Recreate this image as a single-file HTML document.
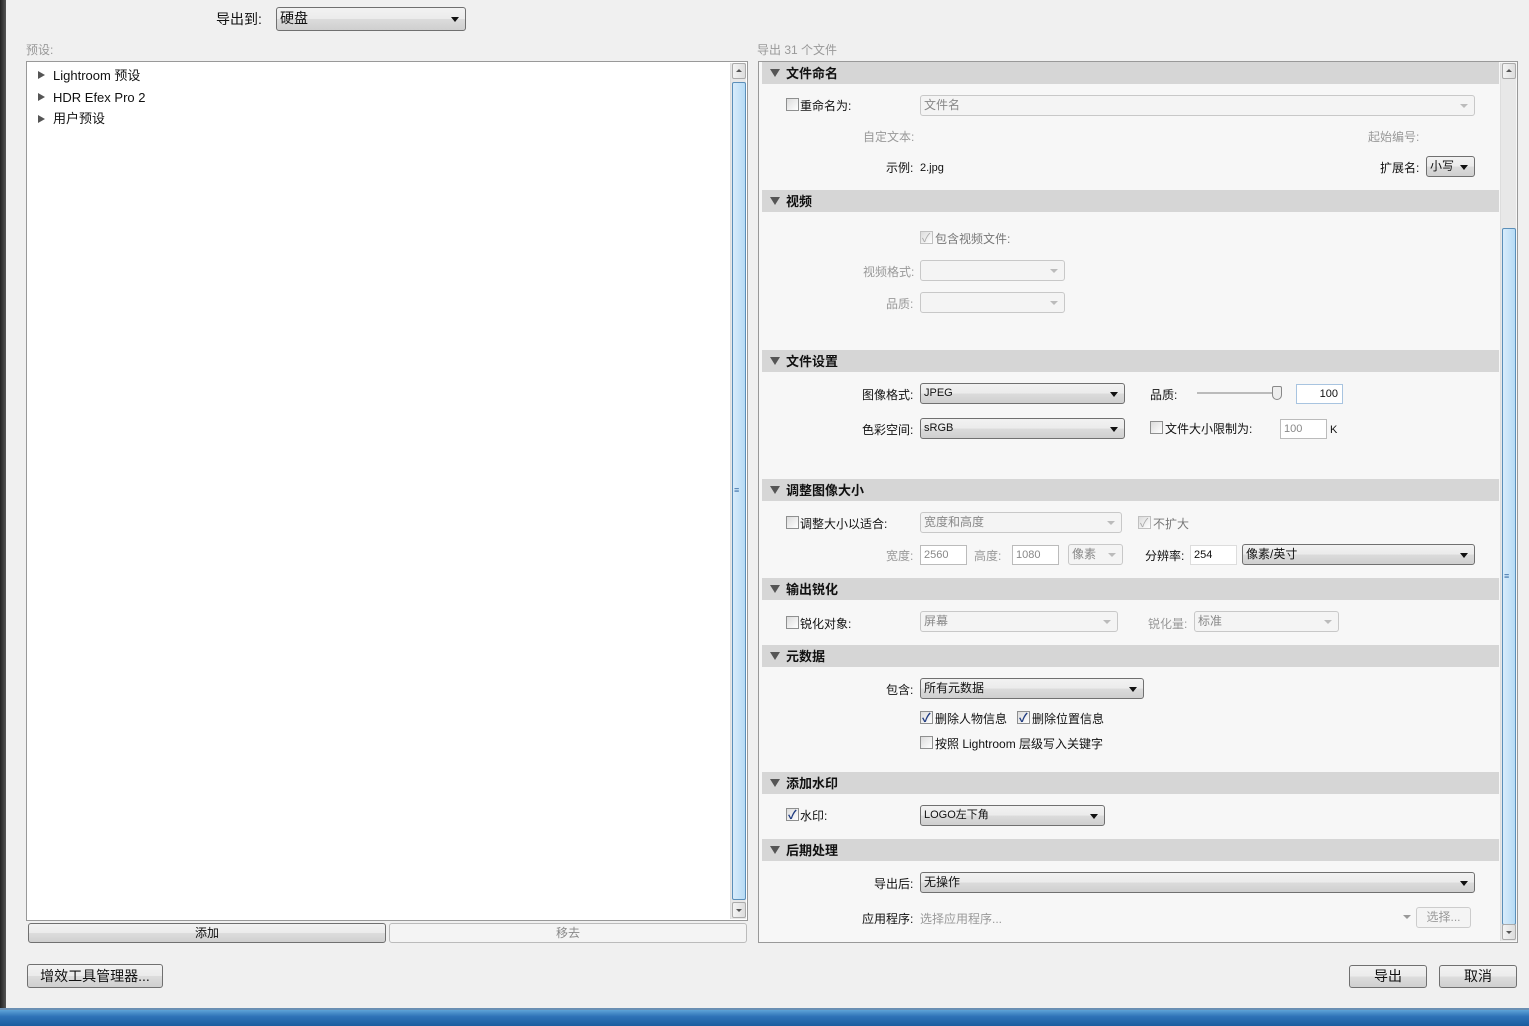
<!DOCTYPE html>
<html><head><meta charset="utf-8"><style>
*{box-sizing:border-box;margin:0;padding:0}
body{width:1529px;height:1026px;background:#f0f0f0;position:relative;overflow:hidden;font-family:"Liberation Sans","Noto Sans CJK SC",sans-serif;font-size:12px;color:#111}
.a{position:absolute}
.t{position:absolute;white-space:nowrap;line-height:16px;margin-top:1px}
.g{color:#999}
.sel{position:absolute;border:1px solid #707070;border-radius:3px;background:linear-gradient(#f2f2f2,#ebebeb 50%,#dcdcdc 50%,#cfcfcf);padding-left:3px;line-height:19px;font-size:12px}
.sel::after{content:"";position:absolute;right:6px;top:50%;margin-top:-2px;border:4px solid transparent;border-top:5px solid #111;border-bottom:0}
.dsel{position:absolute;border:1px solid #c8c8c8;border-radius:3px;background:#f4f4f4;padding-left:3px;line-height:19px;color:#888}
.dsel::after{content:"";position:absolute;right:6px;top:50%;margin-top:-2px;border:4px solid transparent;border-top:4px solid #bbb;border-bottom:0}
.cb{position:absolute;width:13px;height:13px;border:1px solid #8e8f8f;background:linear-gradient(135deg,#dcdcdc,#fff)}
.cb.k::after{content:"✓";position:absolute;left:1px;top:-3px;font-size:12px;color:#1f3b80;font-weight:bold}
.cb.d{border-color:#c0c0c0}
.cb.d::after{content:"✓";position:absolute;left:1px;top:-3px;font-size:12px;color:#aaa}
.in{position:absolute;border:1px solid #bbb;background:#fff;line-height:18px;padding-left:3px;font-size:11px}
.hd{position:absolute;left:762px;width:737px;height:22px;background:#d6d6d6;font-weight:bold;font-size:13px;line-height:23px;padding-left:24px}
.hd::before{content:"";position:absolute;left:8px;top:7px;border:5px solid transparent;border-top:8px solid #555;border-bottom:0}
.btn{position:absolute;border:1px solid #707070;border-radius:3px;background:linear-gradient(#f2f2f2,#ebebeb 50%,#dddddd 50%,#cfcfcf);text-align:center;font-size:14px}
.sb{position:absolute;width:16px;background:#e8e8e8;border-left:1px solid #ddd}
.arr{position:absolute;left:1px;width:14px;height:16px;border:1px solid #aaa;border-radius:2px;background:linear-gradient(90deg,#f4f4f4,#ddd)}
.arr.u::after{content:"";position:absolute;left:3px;top:5px;border:3px solid transparent;border-bottom:3px solid #555;border-top:0}
.arr.dn::after{content:"";position:absolute;left:3px;top:6px;border:3px solid transparent;border-top:3px solid #555;border-bottom:0}
.th{position:absolute;left:1px;width:14px;border:1px solid #5b8fb9;border-radius:2px;background:linear-gradient(90deg,#d8ecfb,#b7dbf5)}
.tri{position:absolute;border:4px solid transparent;border-left:7px solid #555;border-right:0}
</style></head><body>
<div class="a" style="left:0;top:0;width:6px;height:1010px;background:linear-gradient(90deg,#222,#555)"></div>
<div class="a" style="left:0;top:1008px;width:1529px;height:2px;background:#6a8fb3"></div>
<div class="a" style="left:0;top:1010px;width:1529px;height:16px;background:linear-gradient(#5ea3d8,#2f73b8 40%,#1a5c9e)"></div>

<div class="t" style="left:216px;top:10px;font-size:14px">导出到:</div>
<div class="sel" style="left:276px;top:7px;width:190px;height:24px;line-height:21px;font-size:14px">硬盘</div>
<div class="t g" style="left:26px;top:41px">预设:</div>

<div class="a" style="left:26px;top:61px;width:722px;height:860px;background:#fff;border:1px solid #999"></div>
<div class="tri" style="left:38px;top:71px"></div><div class="t" style="left:53px;top:67px;font-size:13px">Lightroom 预设</div>
<div class="tri" style="left:38px;top:93px"></div><div class="t" style="left:53px;top:89px;font-size:13px">HDR Efex Pro 2</div>
<div class="tri" style="left:38px;top:115px"></div><div class="t" style="left:53px;top:110px;font-size:13px">用户预设</div>
<div class="sb" style="left:730px;top:63px;height:856px">
 <div class="arr u" style="top:0"></div><div class="th" style="top:19px;height:818px"></div><div class="arr dn" style="top:839px"></div>
 <div class="t" style="left:3px;top:418px;font-size:9px;color:#3a6ea5">≡</div>
</div>
<div class="btn" style="left:28px;top:923px;width:358px;height:20px;font-size:12px;line-height:19px">添加</div>
<div class="btn" style="left:389px;top:923px;width:358px;height:20px;font-size:12px;line-height:19px;background:#f4f4f4;border-color:#bbb;color:#888">移去</div>
<div class="btn" style="left:27px;top:964px;width:136px;height:24px;line-height:22px">增效工具管理器...</div>

<div class="t g" style="left:757px;top:41px">导出 31 个文件</div>
<div class="a" style="left:758px;top:61px;width:760px;height:882px;background:#f7f7f7;border:1px solid #999"></div>
<div class="sb" style="left:1500px;top:63px;height:878px">
 <div class="arr u" style="top:0"></div><div class="th" style="top:165px;height:697px"></div><div class="arr dn" style="top:861px"></div>
 <div class="t" style="left:3px;top:504px;font-size:9px;color:#3a6ea5">≡</div>
</div>

<div class="hd" style="top:62px">文件命名</div>
<div class="cb" style="left:786px;top:98px"></div><div class="t" style="left:800px;top:97px">重命名为:</div>
<div class="dsel" style="left:920px;top:95px;width:555px;height:21px">文件名</div>
<div class="t g" style="left:863px;top:128px">自定文本:</div>
<div class="t g" style="left:1368px;top:128px">起始编号:</div>
<div class="t" style="left:886px;top:159px">示例:</div><div class="t" style="left:920px;top:159px;font-size:11px">2.jpg</div>
<div class="t" style="left:1380px;top:159px">扩展名:</div>
<div class="sel" style="left:1426px;top:156px;width:49px;height:21px">小写</div>

<div class="hd" style="top:190px">视频</div>
<div class="cb d" style="left:920px;top:231px"></div><div class="t g" style="left:935px;top:230px;color:#777">包含视频文件:</div>
<div class="t g" style="left:863px;top:263px">视频格式:</div><div class="dsel" style="left:920px;top:260px;width:145px;height:21px"></div>
<div class="t g" style="left:886px;top:295px">品质:</div><div class="dsel" style="left:920px;top:292px;width:145px;height:21px"></div>

<div class="hd" style="top:350px">文件设置</div>
<div class="t" style="left:862px;top:386px">图像格式:</div><div class="sel" style="left:920px;top:383px;width:205px;height:21px;font-size:11px">JPEG</div>
<div class="t" style="left:1150px;top:386px">品质:</div>
<div class="a" style="left:1197px;top:392px;width:82px;height:2px;background:#bbb"></div>
<div class="a" style="left:1272px;top:386px;width:10px;height:14px;border:1px solid #888;border-radius:2px 2px 5px 5px;background:#eee"></div>
<div class="in" style="left:1296px;top:384px;width:47px;height:20px;text-align:right;padding-right:4px;border-color:#a8c4e0">100</div>
<div class="t" style="left:862px;top:421px">色彩空间:</div><div class="sel" style="left:920px;top:418px;width:205px;height:21px;font-size:11px">sRGB</div>
<div class="cb" style="left:1150px;top:421px"></div><div class="t" style="left:1165px;top:420px">文件大小限制为:</div>
<div class="in" style="left:1280px;top:419px;width:47px;height:20px;color:#888">100</div><div class="t" style="left:1330px;top:421px;font-size:11px">K</div>

<div class="hd" style="top:479px">调整图像大小</div>
<div class="cb" style="left:786px;top:516px"></div><div class="t" style="left:800px;top:515px">调整大小以适合:</div>
<div class="dsel" style="left:920px;top:512px;width:202px;height:21px">宽度和高度</div>
<div class="cb d" style="left:1138px;top:516px"></div><div class="t g" style="left:1153px;top:515px;color:#777">不扩大</div>
<div class="t g" style="left:886px;top:547px">宽度:</div><div class="in" style="left:920px;top:545px;width:47px;height:20px;color:#888">2560</div>
<div class="t g" style="left:974px;top:547px">高度:</div><div class="in" style="left:1012px;top:545px;width:47px;height:20px;color:#888">1080</div>
<div class="dsel" style="left:1068px;top:544px;width:55px;height:21px">像素</div>
<div class="t" style="left:1145px;top:547px">分辨率:</div><div class="in" style="left:1190px;top:545px;width:47px;height:20px;border-color:#ddd">254</div>
<div class="sel" style="left:1242px;top:544px;width:233px;height:21px">像素/英寸</div>

<div class="hd" style="top:578px">输出锐化</div>
<div class="cb" style="left:786px;top:616px"></div><div class="t" style="left:800px;top:615px">锐化对象:</div>
<div class="dsel" style="left:920px;top:611px;width:198px;height:21px">屏幕</div>
<div class="t g" style="left:1148px;top:615px">锐化量:</div>
<div class="dsel" style="left:1194px;top:611px;width:145px;height:21px">标准</div>

<div class="hd" style="top:645px">元数据</div>
<div class="t" style="left:886px;top:681px">包含:</div><div class="sel" style="left:920px;top:678px;width:224px;height:21px">所有元数据</div>
<div class="cb k" style="left:920px;top:711px"></div><div class="t" style="left:935px;top:710px">删除人物信息</div>
<div class="cb k" style="left:1017px;top:711px"></div><div class="t" style="left:1032px;top:710px">删除位置信息</div>
<div class="cb" style="left:920px;top:736px"></div><div class="t" style="left:935px;top:735px">按照 Lightroom 层级写入关键字</div>

<div class="hd" style="top:772px">添加水印</div>
<div class="cb k" style="left:786px;top:808px"></div><div class="t" style="left:800px;top:807px">水印:</div>
<div class="sel" style="left:920px;top:805px;width:185px;height:21px;font-size:11px">LOGO左下角</div>

<div class="hd" style="top:839px">后期处理</div>
<div class="t" style="left:874px;top:875px">导出后:</div><div class="sel" style="left:920px;top:872px;width:555px;height:21px">无操作</div>
<div class="t" style="left:862px;top:910px">应用程序:</div><div class="t g" style="left:920px;top:910px">选择应用程序...</div>
<div class="a" style="left:1403px;top:915px;border:4px solid transparent;border-top:4px solid #999"></div>
<div class="btn" style="left:1416px;top:907px;width:55px;height:21px;font-size:12px;line-height:19px;color:#999;border-color:#ccc;background:#f4f4f4">选择...</div>

<div class="btn" style="left:1349px;top:965px;width:78px;height:23px;line-height:21px">导出</div>
<div class="btn" style="left:1439px;top:965px;width:78px;height:23px;line-height:21px">取消</div>
</body></html>
